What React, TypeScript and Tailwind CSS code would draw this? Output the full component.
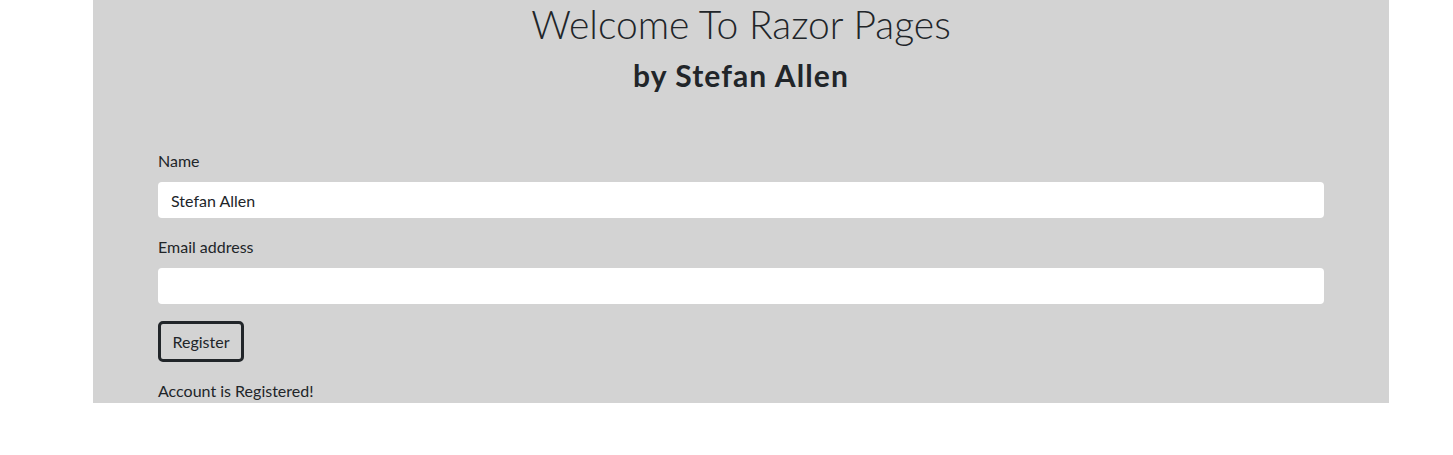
export default function App() {
  return (
    <div className="min-h-[455px] bg-white text-[#212529]" style={{ fontFamily: 'Lato, "Open Sans", sans-serif' }}>
      <div className="ml-[93px] w-[1296px] bg-[#d3d3d3]">
        <h1 className="text-center text-[39px] font-light leading-[48px]">Welcome To Razor Pages</h1>
        <h3 className="mt-[10px] text-center text-[30px] font-bold leading-[34px] tracking-[1.1px]">by Stefan Allen</h3>

        <form className="px-[65px] pt-[57px]" onSubmit={(e) => e.preventDefault()}>
          <div className="mb-[17px]">
            <label className="mb-[9px] block text-[16px] leading-6">Name</label>
            <input
              className="block h-[36px] w-full rounded-[4px] bg-white px-[13px] text-[16px] outline-none"
              defaultValue="Stefan Allen"
            />
          </div>
          <div className="mb-[17px]">
            <label className="mb-[9px] block text-[16px] leading-6">Email address</label>
            <input className="block h-[36px] w-full rounded-[4px] bg-white px-[13px] text-[16px] outline-none" />
          </div>
          <button
            type="submit"
            className="h-[41px] w-[86px] rounded-[5px] border-[3px] border-[#212529] text-[16px] text-[#212529]"
          >
            Register
          </button>
          <p className="mt-[17px] text-[16px] leading-6">Account is Registered!</p>
        </form>
      </div>
    </div>
  );
}
